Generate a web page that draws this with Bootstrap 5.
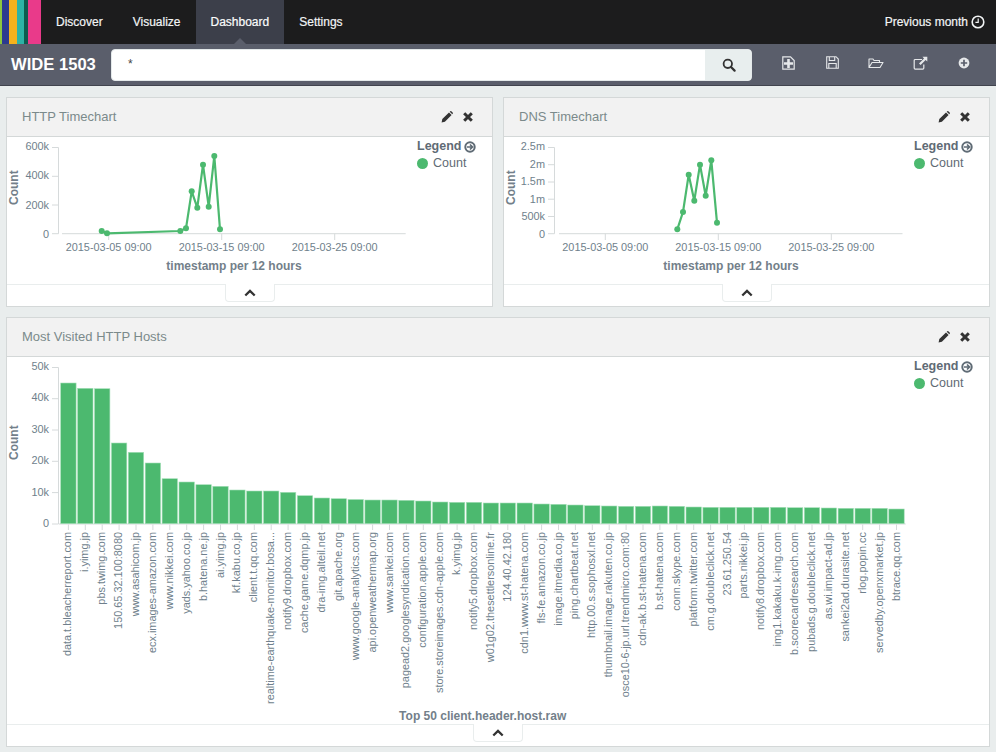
<!DOCTYPE html>
<html lang="en">
<head>
<meta charset="utf-8">
<title>Kibana dashboard</title>
<link href="https://cdn.jsdelivr.net/npm/bootstrap@5.3.0/dist/css/bootstrap.min.css" rel="stylesheet">
<style>
html,body{height:100%}
body{background:#e9eded;font-family:"Liberation Sans",Arial,sans-serif;font-size:12px;color:#6f7c88;overflow:hidden}
.topbar{height:44px;background:#1c1c1d;flex:none}
.brand-strip{width:41px;height:44px;background:linear-gradient(90deg,#8cc63f 0 2px,#2c3a8f 2px 8.5px,#f6b21c 8.5px 17px,#2db3a6 17px 23.5px,#0d5c4f 23.5px 27.5px,#e93a8a 27.5px 41px);flex:none}
.tab-link{display:flex;align-items:center;height:44px;padding:0 15px;color:#f2f4f5;text-decoration:none;font-size:12px;position:relative;-webkit-text-stroke:.2px #f2f4f5}
.tab-link.on{background:#3c3f4a;color:#fff}
.tab-link.on::after{content:"";position:absolute;left:50%;bottom:0;margin-left:-6px;border:6px solid transparent;border-top:0;border-bottom-color:#5a5e6b}
.when{color:#f2f4f5;font-size:12px;gap:3px;padding-right:11px;-webkit-text-stroke:.2px #f2f4f5}
.toolbar{height:42px;background:#5a5e6b;border-bottom:1px solid #41444e;flex:none}
.board-name{width:111px;padding-left:11px;font-size:16.6px;font-weight:700;color:#fff;flex:none;margin-top:1px}
.query-box{width:641px;height:32px;margin-top:1px;background:#fff;border-radius:4px;border:1px solid #e4e9ea;flex:none}
.query-text{flex:1;padding-left:16px;font-size:12px;color:#444;line-height:28px}
.query-btn{width:46px;background:#e8eeee;border-radius:0 3px 3px 0;padding-left:2px}
.tool-row{padding-left:14px;margin-bottom:3px}
.tool-cell{width:44px;color:#e6e8ea}
.board{padding:11px 6px 0;gap:10px}
.panel-box{background:#fff;border:1px solid #d4d8d8}
.top-pair{gap:10px}
.top-pair .panel-box{width:487px;height:210px}
.wide-panel{height:430px}
.panel-top{height:39px;background:#f2f2f2;border-bottom:1px solid #d4d8d8;padding:0 19px 0 15px;flex:none}
.panel-title{font-size:13px;color:#7b8a8b}
.panel-tools{gap:10px;color:#333}
.chart-area{flex:1;min-height:0;position:relative}
.chart-svg{display:block;position:absolute;left:0;top:0}
.chart-svg text{font-family:"Liberation Sans",Arial,sans-serif}
.tick-label{font-size:10.9px;fill:#6f7f8c}
.axis-title{font-size:12px;font-weight:700;fill:#737f8a}
.axis-line{stroke:#d6dadb;stroke-width:1;fill:none}
.series-line{stroke:#4cb96f;stroke-width:2.2;fill:none}
.series-dot{fill:#4cb96f}
.bar-rect{fill:#4cb96f;stroke:#a6dfb9;stroke-width:.6}
.legend-block{position:absolute;top:1px;width:70px;font-size:12.5px}
.legend-at{left:410px}
.legend-at-wide{left:907px}
.legend-head{font-weight:700;color:#5f6b75;gap:3px;line-height:17px}
.legend-item{color:#5f6b75;gap:5px;line-height:17px}
.legend-dot{width:11px;height:11px;border-radius:50%;background:#4cb96f;flex:none}
.panel-foot{flex:none;border-top:1px solid #e9eded;height:22px}
.foot-tab{width:50px;height:18px;background:#fff;border:1px solid #e9eded;border-top:0;border-radius:0 0 4px 4px;margin-top:-1px;position:relative;color:#333}
</style>
</head>
<body class="d-flex flex-column">
<nav class="topbar d-flex align-items-center">
  <div class="brand-strip"></div>
  <div class="d-flex">
    <a class="tab-link" href="#">Discover</a>
    <a class="tab-link" href="#">Visualize</a>
    <a class="tab-link on" href="#">Dashboard</a>
    <a class="tab-link" href="#">Settings</a>
  </div>
  <div class="when ms-auto d-flex align-items-center">Previous month
    <svg width="14" height="14" viewBox="0 0 14 14"><circle cx="7" cy="7" r="5.8" fill="none" stroke="currentColor" stroke-width="1.6"/><path d="M7.2 3.6V7.4H4.4" fill="none" stroke="currentColor" stroke-width="1.2"/></svg>
  </div>
</nav>
<div class="toolbar d-flex align-items-center">
  <div class="board-name">WIDE 1503</div>
  <div class="query-box d-flex">
    <div class="query-text">*</div>
    <div class="query-btn d-flex align-items-center justify-content-center">
      <svg width="14" height="14" viewBox="0 0 14 14"><circle cx="5.8" cy="5.8" r="4.2" fill="none" stroke="#333" stroke-width="1.8"/><path d="M9 9l3.6 3.6" stroke="#333" stroke-width="2.2" stroke-linecap="round"/></svg>
    </div>
  </div>
  <div class="tool-row d-flex">
    <div class="tool-cell d-flex justify-content-center"><svg width="13" height="14" viewBox="0 0 13 14"><path d="M.8.8h7.7l3.700 3.700v8.700H.8z" fill="none" stroke="currentColor" stroke-width="1.200"/><path d="M5.200 3h2.600v3.200H11v2.600H7.800V12H5.200V8.800H2V6.200h3.200z" fill="currentColor"/></svg></div>
    <div class="tool-cell d-flex justify-content-center"><svg width="13" height="13" viewBox="0 0 13 13"><path d="M.7.7h9.300l2.300 2.300v9.300H.7z" fill="none" stroke="currentColor" stroke-width="1.100"/><path d="M3.300 1v3.500h5.400V1M2.800 12V7.500h7.400V12" fill="none" stroke="currentColor" stroke-width="1.100"/></svg></div>
    <div class="tool-cell d-flex justify-content-center"><svg width="16" height="14" viewBox="0 0 16 14"><path d="M1 11.500V3h4l1 1.500h5.500V6.500M1 11.500h11l3-5H4z" fill="none" stroke="currentColor" stroke-linejoin="round" stroke-width="1.100"/></svg></div>
    <div class="tool-cell d-flex justify-content-center"><svg width="15" height="14" viewBox="0 0 15 14"><path d="M9 3.500H2.200a1 1 0 0 0-1 1v7.600a1 1 0 0 0 1 1h7.600a1 1 0 0 0 1-1V8.500" fill="none" stroke="currentColor" stroke-width="1.200"/><path d="M9.500.8H14.300V5.600L12.600 4 7.600 9 6 7.400 11 2.400z" fill="currentColor"/></svg></div>
    <div class="tool-cell d-flex justify-content-center"><svg width="14" height="14" viewBox="0 0 14 14"><circle cx="7" cy="7" r="5.400" fill="currentColor"/><path d="M7 3.800v6.400M3.800 7h6.400" stroke="#5a5e6b" stroke-width="1.700"/></svg></div>
  </div>
</div>
<main class="board d-flex flex-column">
  <div class="top-pair d-flex">
    <section class="panel-box d-flex flex-column">
      <div class="panel-top d-flex align-items-center justify-content-between">
        <span class="panel-title">HTTP Timechart</span>
        <span class="panel-tools d-flex align-items-center">
          <svg width="12" height="12" viewBox="0 0 12 12"><path d="M.6 11.400l.7-3.300L8 1.400 10.600 4 3.900 10.700zM8.700.7l.6-.4a1 1 0 0 1 1.300.1l1 1a1 1 0 0 1 .1 1.300l-.4.600z" fill="currentColor"/></svg>
          <svg width="10" height="10" viewBox="0 0 10 10"><path d="M1.200 1.200l7.600 7.600M8.800 1.200L1.200 8.800" stroke="currentColor" stroke-width="3"/></svg>
        </span>
      </div>
      <div class="chart-area">
        <svg class="chart-svg" width="485" height="147" viewBox="7 137 485 147">
          <path class="axis-line" d="M52 147.500H58.500V233.700H52M52 176.300H58.500M52 205H58.500M62 233.700H405.700M108.700 233.700V240M221.700 233.700V240M334.700 233.700V240"/>
          <g class="tick-label" text-anchor="end"><text x="49" y="150">600k</text><text x="49" y="179.200">400k</text><text x="49" y="208.900">200k</text><text x="49" y="237.500">0</text></g>
          <g class="tick-label" text-anchor="middle"><text x="108.700" y="251">2015-03-05 09:00</text><text x="221.700" y="251">2015-03-15 09:00</text><text x="334.700" y="251">2015-03-25 09:00</text></g>
          <text class="axis-title" text-anchor="middle" transform="translate(18 187.700) rotate(-90)">Count</text>
          <text class="axis-title" text-anchor="middle" x="234" y="270">timestamp per 12 hours</text>
          <polyline class="series-line" points="101.700,231 107,233.300 180.300,231 186,228.300 191.700,191.300 197.300,207.700 203,164.700 208.700,206.700 214.300,156 220,229.300"/>
          <g class="series-dot"><circle cx="101.700" cy="231" r="3"/><circle cx="107" cy="233.300" r="3"/><circle cx="180.300" cy="231" r="3"/><circle cx="186" cy="228.300" r="3"/><circle cx="191.700" cy="191.300" r="3"/><circle cx="197.300" cy="207.700" r="3"/><circle cx="203" cy="164.700" r="3"/><circle cx="208.700" cy="206.700" r="3"/><circle cx="214.300" cy="156" r="3"/><circle cx="220" cy="229.300" r="3"/></g>
        </svg>
        <div class="legend-block legend-at">
          <div class="legend-head d-flex align-items-center">Legend <svg width="12" height="12" viewBox="0 0 12 12"><circle cx="6" cy="6" r="4.700" fill="none" stroke="currentColor" stroke-width="2"/><path d="M3 6h5M6 3.500L8.500 6 6 8.500" fill="none" stroke="currentColor" stroke-width="1.700"/></svg></div>
          <div class="legend-item d-flex align-items-center"><span class="legend-dot"></span>Count</div>
        </div>
      </div>
      <div class="panel-foot d-flex justify-content-center"><div class="foot-tab d-flex align-items-center justify-content-center"><svg width="12" height="8" viewBox="0 0 12 8"><path d="M1.300 6.500L6 1.900l4.700 4.600" fill="none" stroke="currentColor" stroke-width="2.300"/></svg></div></div>
    </section>
    <section class="panel-box d-flex flex-column">
      <div class="panel-top d-flex align-items-center justify-content-between">
        <span class="panel-title">DNS Timechart</span>
        <span class="panel-tools d-flex align-items-center">
          <svg width="12" height="12" viewBox="0 0 12 12"><path d="M.6 11.400l.7-3.300L8 1.400 10.600 4 3.900 10.700zM8.700.7l.6-.4a1 1 0 0 1 1.300.1l1 1a1 1 0 0 1 .1 1.300l-.4.600z" fill="currentColor"/></svg>
          <svg width="10" height="10" viewBox="0 0 10 10"><path d="M1.200 1.200l7.600 7.600M8.800 1.200L1.200 8.800" stroke="currentColor" stroke-width="3"/></svg>
        </span>
      </div>
      <div class="chart-area">
        <svg class="chart-svg" width="485" height="147" viewBox="504 137 485 147">
          <path class="axis-line" d="M548 147.500H554.500V233.700H548M548 164.700H554.500M548 182H554.500M548 199.200H554.500M548 216.500H554.500M559 233.700H902.500M605.300 233.700V240M718.300 233.700V240M831.300 233.700V240"/>
          <g class="tick-label" text-anchor="end"><text x="545" y="150">2.5m</text><text x="545" y="168">2m</text><text x="545" y="185">1.5m</text><text x="545" y="203">1m</text><text x="545" y="220">500k</text><text x="545" y="237.500">0</text></g>
          <g class="tick-label" text-anchor="middle"><text x="605.300" y="251">2015-03-05 09:00</text><text x="718.300" y="251">2015-03-15 09:00</text><text x="831.300" y="251">2015-03-25 09:00</text></g>
          <text class="axis-title" text-anchor="middle" transform="translate(515 187.700) rotate(-90)">Count</text>
          <text class="axis-title" text-anchor="middle" x="731" y="270">timestamp per 12 hours</text>
          <polyline class="series-line" points="677.300,229.300 683,212 688.700,174.700 694.300,200.700 700,164.700 705.700,195.700 711.300,160.300 717,222.700"/>
          <g class="series-dot"><circle cx="677.300" cy="229.300" r="3"/><circle cx="683" cy="212" r="3"/><circle cx="688.700" cy="174.700" r="3"/><circle cx="694.300" cy="200.700" r="3"/><circle cx="700" cy="164.700" r="3"/><circle cx="705.700" cy="195.700" r="3"/><circle cx="711.300" cy="160.300" r="3"/><circle cx="717" cy="222.700" r="3"/></g>
        </svg>
        <div class="legend-block legend-at">
          <div class="legend-head d-flex align-items-center">Legend <svg width="12" height="12" viewBox="0 0 12 12"><circle cx="6" cy="6" r="4.700" fill="none" stroke="currentColor" stroke-width="2"/><path d="M3 6h5M6 3.500L8.500 6 6 8.500" fill="none" stroke="currentColor" stroke-width="1.700"/></svg></div>
          <div class="legend-item d-flex align-items-center"><span class="legend-dot"></span>Count</div>
        </div>
      </div>
      <div class="panel-foot d-flex justify-content-center"><div class="foot-tab d-flex align-items-center justify-content-center"><svg width="12" height="8" viewBox="0 0 12 8"><path d="M1.300 6.500L6 1.900l4.700 4.600" fill="none" stroke="currentColor" stroke-width="2.300"/></svg></div></div>
    </section>
  </div>
  <section class="panel-box wide-panel d-flex flex-column">
    <div class="panel-top d-flex align-items-center justify-content-between">
      <span class="panel-title">Most Visited HTTP Hosts</span>
      <span class="panel-tools d-flex align-items-center">
        <svg width="12" height="12" viewBox="0 0 12 12"><path d="M.6 11.400l.7-3.300L8 1.400 10.600 4 3.900 10.700zM8.700.7l.6-.4a1 1 0 0 1 1.300.1l1 1a1 1 0 0 1 .1 1.300l-.4.600z" fill="currentColor"/></svg>
        <svg width="10" height="10" viewBox="0 0 10 10"><path d="M1.200 1.200l7.600 7.600M8.800 1.200L1.200 8.800" stroke="currentColor" stroke-width="3"/></svg>
      </span>
    </div>
    <div class="chart-area">
      <svg class="chart-svg" id="hostChart" width="982" height="367" viewBox="7 357 982 367"></svg>
      <div class="legend-block legend-at-wide">
        <div class="legend-head d-flex align-items-center">Legend <svg width="12" height="12" viewBox="0 0 12 12"><circle cx="6" cy="6" r="4.700" fill="none" stroke="currentColor" stroke-width="2"/><path d="M3 6h5M6 3.500L8.500 6 6 8.500" fill="none" stroke="currentColor" stroke-width="1.700"/></svg></div>
        <div class="legend-item d-flex align-items-center"><span class="legend-dot"></span>Count</div>
      </div>
    </div>
    <div class="panel-foot d-flex justify-content-center"><div class="foot-tab d-flex align-items-center justify-content-center"><svg width="12" height="8" viewBox="0 0 12 8"><path d="M1.300 6.500L6 1.900l4.700 4.600" fill="none" stroke="currentColor" stroke-width="2.300"/></svg></div></div>
  </section>
</main>
<script>
(function(){
  var hosts=[["data.t.bleacherreport.com",383],["i.yimg.jp",388.3],["pbs.twimg.com",388.7],["150.65.32.100:8080",443],["www.asahicom.jp",452.3],["ecx.images-amazon.com",463],["www.nikkei.com",478.7],["yads.yahoo.co.jp",482],["b.hatena.ne.jp",484.7],["ai.yimg.jp",486.3],["kf.kabu.co.jp",490],["client.t.qq.com",491],["realtime-earthquake-monitor.bosa...",491],["notify9.dropbox.com",492.3],["cache.game.dqmp.jp",495.7],["dra-img.alteil.net",498],["git.apache.org",498.7],["www.google-analytics.com",499.5],["api.openweathermap.org",500],["www.sankei.com",500],["pagead2.googlesyndication.com",500.3],["configuration.apple.com",501],["store.storeimages.cdn-apple.com",502],["k.yimg.jp",502.3],["notify5.dropbox.com",502.3],["w01g02.thesettlersonline.fr",503],["124.40.42.180",503],["cdn1.www.st-hatena.com",503],["fls-fe.amazon.co.jp",504],["image.itmedia.co.jp",504.3],["ping.chartbeat.net",505],["http.00.s.sophosxl.net",505.7],["thumbnail.image.rakuten.co.jp",506],["osce10-6-jp.url.trendmicro.com:80",506.3],["cdn-ak.b.st-hatena.com",506.3],["b.st-hatena.com",506],["conn.skype.com",506.3],["platform.twitter.com",507],["cm.g.doubleclick.net",507.3],["23.61.250.54",507.3],["parts.nikkei.jp",507.3],["notify8.dropbox.com",507.3],["img1.kakaku.k-img.com",507.3],["b.scorecardresearch.com",507.7],["pubads.g.doubleclick.net",507.7],["as.wi.impact-ad.jp",508],["sankei2ad.durasite.net",508.3],["rlog.popin.cc",508.3],["servedby.openxmarket.jp",508.3],["btrace.qq.com",509]];
  var s='<path class="axis-line" d="M52 367.500H58.500V524H52M52 398.700H58.500M52 430H58.500M52 461.300H58.500M52 492.600H58.500M59 524H905.700"/>';
  s+='<g class="tick-label" text-anchor="end">';
  ["50k","40k","30k","20k","10k","0"].forEach(function(t,i){s+='<text x="49" y="'+(370+i*31.4).toFixed(1)+'">'+t+'</text>';});
  s+='</g>';
  hosts.forEach(function(h,i){
    var x=60.7+i*16.9,c=x+7.7;
    s+='<rect class="bar-rect" x="'+x.toFixed(1)+'" y="'+h[1]+'" width="15.4" height="'+(523.7-h[1]).toFixed(1)+'"/>';
    s+='<path class="axis-line" d="M'+c.toFixed(1)+' 524.500V530"/>';
    s+='<text class="tick-label" text-anchor="end" transform="translate('+(c+3).toFixed(1)+' 532) rotate(-90)">'+h[0]+'</text>';
  });
  s+='<text class="axis-title" text-anchor="middle" transform="translate(18 442.700) rotate(-90)">Count</text>';
  s+='<text class="axis-title" text-anchor="middle" x="482.700" y="720">Top 50 client.header.host.raw</text>';
  document.getElementById('hostChart').innerHTML=s;
})();
</script>
<script src="https://cdn.jsdelivr.net/npm/bootstrap@5.3.0/dist/js/bootstrap.bundle.min.js"></script>
</body>
</html>
